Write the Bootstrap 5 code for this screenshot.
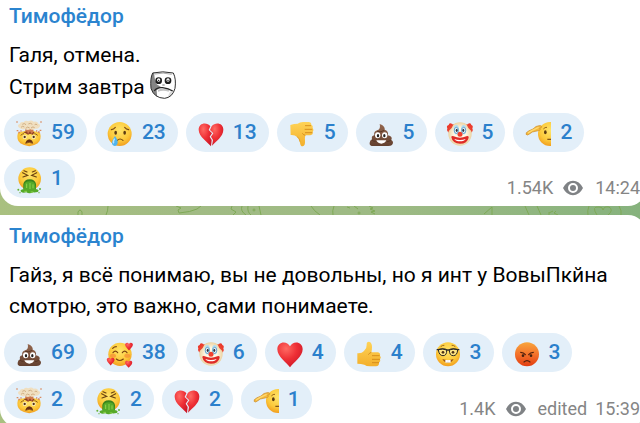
<!DOCTYPE html>
<html lang="ru">
<head>
<meta charset="utf-8">
<meta name="viewport" content="width=device-width, initial-scale=1">
<title>Тимофёдор</title>
<link href="https://cdn.jsdelivr.net/npm/bootstrap@5.3.0/dist/css/bootstrap.min.css" rel="stylesheet">
<style>
html, body { height: 100%; overflow: hidden; }
body { font-family: Roboto, "Noto Sans", sans-serif; font-size: 21px; line-height: 31px; color: #000;
  background: linear-gradient(90deg, #a9c080 0%, #a1bb84 30%, #9dba84 62%, #86b27d 100%); }
.message { margin-right: -6px; padding: 5px 6px 8px 4px; background: #fff; border-radius: 0 18px 18px 18px; }
.message-first { border-top-right-radius: 0; padding-top: 0; }
.author { font-weight: 500; color: #2b84cf; padding: 1px 0 8px 5px; }
.message-text { padding: 0 5px; margin-bottom: 11px; }
.message-first .message-text { margin-bottom: 10px; }
.sticker { width: 26px; height: 28px; vertical-align: -5px; }
.reactions { column-gap: 8px; row-gap: 8px; }
.message-first .reactions { row-gap: 7px; }
.reaction { height: 39px; padding: 0 12px; gap: 9px; border: 0; border-radius: 20px; background: #e3eff9; color: #2b80cc; font-weight: 500; }
.emoji { width: 26px; height: 26px; overflow: visible; }
.emoji-label { line-height: 33px; }
.meta { font-size: 18px; line-height: 20px; color: #858585; }
.eye { width: 20px; height: 16px; margin: 0 12px 0 10px; }
.wallpaper { height: 9px; display: block; width: 100%; }
</style>
<script src="https://cdn.jsdelivr.net/npm/bootstrap@5.3.0/dist/js/bootstrap.bundle.min.js"></script>
</head>
<body>
<svg width="0" height="0" class="position-absolute" aria-hidden="true">
  <defs>
    <radialGradient id="gFace" cx=".5" cy=".35" r=".7"><stop offset="0" stop-color="#ffe46a"/><stop offset=".6" stop-color="#fcc93a"/><stop offset="1" stop-color="#ef9419"/></radialGradient>
    <linearGradient id="gHot" x2="0" y2="1"><stop offset="0" stop-color="#f8a53c"/><stop offset=".5" stop-color="#f4722b"/><stop offset="1" stop-color="#e23c10"/></linearGradient>
    <radialGradient id="gHeart" cx=".35" cy=".25" r=".85"><stop offset="0" stop-color="#ff6a63"/><stop offset=".5" stop-color="#ee2f35"/><stop offset="1" stop-color="#c91526"/></radialGradient>
    <linearGradient id="gHand" x2="0" y2="1"><stop offset="0" stop-color="#ffd357"/><stop offset="1" stop-color="#f3af2b"/></linearGradient>
    <linearGradient id="gPoop" x2="0" y2="1"><stop offset="0" stop-color="#94674f"/><stop offset="1" stop-color="#63402f"/></linearGradient>
    <radialGradient id="gClown"><stop offset=".5" stop-color="#fff8e4"/><stop offset="1" stop-color="#ecd3a3"/></radialGradient>
    <clipPath id="cSalute"><path d="M0 0H78V84H0Z"/></clipPath>
    <clipPath id="cStone"><path d="M8 6Q38-3 70 6Q80 24 76 52Q68 80 44 83Q12 82 3 52Q-1 22 8 6Z"/></clipPath>

    <symbol id="explode" viewBox="0 0 78 78" overflow="visible">
      <path d="M6 38Q39 26 72 38Q78 58 65 70Q40 87 13 70Q0 58 6 38Z" fill="url(#gFace)"/>
      <path d="M22 37Q39 27 56 37L50 44L42 41L36 44L29 40Z" fill="#8f3e24"/>
      <path d="M27 34L30 22H50L53 34L47 42L42 34L36 42L33 34Z" fill="#cf7b4f"/>
      <path d="M8 22Q3 15 11 12Q14 4 23 7Q28 0 37 4Q46-1 53 5Q64 2 67 11Q76 14 70 22Q65 28 57 26Q51 32 43 28Q34 33 28 27Q17 31 8 22Z" fill="#f0dfc0"/>
      <path d="M15 22q5-6 10-1M29 25q6-7 12-1M45 24q6-6 11-1M19 13q6-5 11 1M37 12q6-5 12 1M56 14q4-4 8 1" fill="none" stroke="#d1ae82" stroke-width="3"/>
      <path d="M1 4h4v4H1zM2 30h5v4H2zM7 35h5v5H7zM73 4h4v4h-4zM71 29h5v4h-5zM66 34h5v5h-5zM13 31h4v4h-4zM60 31h4v4h-4z" fill="#d98b5f"/>
      <circle cx="26" cy="51" r="6" fill="#fff4cf"/><circle cx="53" cy="51" r="6" fill="#fff4cf"/>
      <circle cx="26" cy="51" r="3.500" fill="#54320f"/><circle cx="53" cy="51" r="3.500" fill="#54320f"/>
      <path d="M14 46q6-5 10-5M65 46q-6-5-10-5" stroke="#8d5a18" stroke-width="3" fill="none"/>
      <path d="M29 70Q31 59 40 59T50 70Q40 64 29 70Z" fill="#6a3212" stroke="#6a3212" stroke-width="2"/>
    </symbol>
    <symbol id="cry" viewBox="0 0 78 78" overflow="visible">
      <circle cx="38" cy="42" r="36" fill="url(#gFace)"/>
      <ellipse cx="26" cy="38" rx="4" ry="6" fill="#5b3b12"/><ellipse cx="53" cy="38" rx="4" ry="6" fill="#5b3b12"/>
      <path d="M13 29q7-1 12-7M65 29q-7-1-12-7M31 61q8-8 17 0" fill="none" stroke="#7a4b13" stroke-width="3.500" stroke-linecap="round"/>
      <path d="M24 48Q33 61 32 68Q31 77 23 78Q14 76 15 67Q16 59 24 48Z" fill="#4fb3ee"/><path d="M23 56q-6 9-3 14" fill="none" stroke="#b9e6ff" stroke-width="4"/>
    </symbol>
    <symbol id="vomit" viewBox="0 0 78 78" overflow="visible">
      <circle cx="41" cy="38" r="34" fill="url(#gFace)"/>
      <path d="M20 20L35 28L21 33M62 20L47 28L61 33M24 14l9 4M58 14l-9 4" fill="none" stroke="#6b4312" stroke-width="3.500" stroke-linecap="round"/>
      <path d="M22 54Q25 40 41 40T60 54V70H22Z" fill="#39831c"/>
      <path d="M25 55Q26 47 41 46Q57 47 57 56L59 69Q73 72 65 78Q57 80 52 79Q40 85 31 79Q20 82 15 77Q10 71 24 69Z" fill="#55a928"/>
      <path d="M32 53v13M42 51v18M51 55v12M25 76h8M44 78h8" stroke="#90d34d" stroke-width="3"/>
      <circle cx="7" cy="71" r="3" fill="#65b434"/><circle cx="72" cy="69" r="3" fill="#65b434"/><circle cx="12" cy="80" r="2" fill="#65b434"/><circle cx="69" cy="80" r="2" fill="#65b434"/>
    </symbol>
    <symbol id="heart" viewBox="0 0 78 78" overflow="visible">
      <path d="M39 82C29 68 1 50 1 28C1 4 30 1 39 19C48 1 77 4 77 28C77 50 49 68 39 82Z" fill="url(#gHeart)"/>
    </symbol>
    <symbol id="broken" viewBox="0 0 78 78" overflow="visible">
      <path d="M39 79C29 66 2 50 2 29C2 8 27 5 37 19L32 30L42 40L35 50L41 60Z" fill="url(#gHeart)"/>
      <path d="M42 77C52 65 76 50 76 29C76 9 52 5 41 19L36 30L46 40L39 50L45 60Z" fill="url(#gHeart)"/>
    </symbol>
    <symbol id="down" viewBox="0 0 78 78" overflow="visible">
      <path d="M4 15Q15 11 26 11Q32 6 42 6H59Q67 6 67 14Q73 17 71 24Q76 30 71 36Q73 44 64 46H49Q47 53 48 63Q49 77 41 79Q34 79 33 68Q32 57 24 51Q18 44 5 45Z" fill="url(#gHand)"/>
      <path d="M48 17h18M47 28h23M48 38h22M49 46q-6-1-9-6" fill="none" stroke="#cf8617" stroke-width="2.500"/><path d="M33 65q-1-11-9-15" fill="none" stroke="#dc971f" stroke-width="2"/>
    </symbol>
    <symbol id="up" viewBox="0 0 78 78" overflow="visible">
      <path d="M4 40Q18 41 24 33Q33 24 32 15Q31 5 39 5Q48 7 48 21Q48 30 46 37H66Q74 39 72 47Q77 52 72 58Q75 64 69 68Q70 78 60 79H42Q31 79 25 74Q15 71 4 71Z" fill="url(#gHand)"/>
      <path d="M48 47h23M48 58h24M48 68h21M46 37q-6 2-9 7" fill="none" stroke="#cf8617" stroke-width="2.500"/>
    </symbol>
    <symbol id="poop" viewBox="0 0 78 78" overflow="visible">
      <path d="M35 12Q52 18 50 29Q62 32 60 46Q75 49 70 60Q79 66 72 75Q67 79 57 78H19Q3 79 5 68Q6 60 12 58Q9 48 19 46Q16 34 28 31Q39 27 35 12Z" fill="url(#gPoop)"/>
      <path d="M27 34q12 4 22-3M19 48q3 3 7 3M12 60q5 5 11 4M69 60q-6 5-12 5" fill="none" stroke="#513122" stroke-width="2.500"/>
      <ellipse cx="29" cy="46" rx="8" ry="9" fill="#fff"/><ellipse cx="50" cy="46" rx="8" ry="9" fill="#fff"/>
      <ellipse cx="30" cy="47" rx="3.500" ry="5" fill="#222"/><ellipse cx="49" cy="47" rx="3.500" ry="5" fill="#222"/>
      <path d="M25 61H55Q50 71 40 71T25 61Z" fill="#fff"/>
    </symbol>
    <symbol id="clown" viewBox="0 0 78 78" overflow="visible">
      <path d="M16 12Q6 7 5 15Q-3 18 1 25Q-2 34 6 38L18 30ZM62 12Q72 7 73 15Q80 18 76 25Q80 34 72 38L60 30Z" fill="#ec3a2c"/>
      <circle cx="39" cy="42" r="35" fill="url(#gClown)"/>
      <path d="M5 33Q5 15 20 12L14 24ZM73 33Q73 15 58 12L64 24Z" fill="#e94632"/>
      <ellipse cx="28" cy="29" rx="8" ry="14" fill="#b2dcf1"/><ellipse cx="50" cy="29" rx="8" ry="14" fill="#b2dcf1"/>
      <ellipse cx="28" cy="31" rx="6" ry="9" fill="#fff" stroke="#297baf" stroke-width="2"/><ellipse cx="50" cy="31" rx="6" ry="9" fill="#fff" stroke="#297baf" stroke-width="2"/>
      <ellipse cx="29" cy="31" rx="3" ry="5" fill="#243342"/><ellipse cx="49" cy="31" rx="3" ry="5" fill="#243342"/>
      <path d="M13 52Q13 46 20 49Q39 57 58 49Q66 46 65 53Q61 71 39 71T13 52Z" fill="#df2b26"/>
      <path d="M22 57Q39 63 56 57Q52 64 39 64T22 57Z" fill="#fff"/><circle cx="39" cy="43" r="7.500" fill="#f0412e"/>
    </symbol>
    <symbol id="salute" viewBox="0 0 78 78" overflow="visible">
      <g clip-path="url(#cSalute)"><circle cx="75" cy="42" r="36" fill="url(#gFace)"/>
      <ellipse cx="61" cy="37" rx="4" ry="6" fill="#5b3b12"/><path d="M67 58h12" stroke="#7a4b13" stroke-width="3.500"/><path d="M55 27q5-6 11-5" fill="none" stroke="#9a661a" stroke-width="3"/></g>
      <path d="M4 38Q10 32 24 27Q33 17 42 17Q49 16 50 20Q50 24 44 25Q48 27 44 31Q32 34 22 36Q14 42 8 45Q1 45 4 38Z" fill="#f5b93b" stroke="#c98a28" stroke-width="2"/>
      <path d="M9 39Q22 30 41 22" stroke="#ffd970" stroke-width="4" fill="none"/>
    </symbol>
    <symbol id="love" viewBox="0 0 78 78" overflow="visible">
      <circle cx="39" cy="43" r="35" fill="url(#gFace)"/><ellipse cx="18" cy="47" rx="9" ry="6" fill="#f58b36" opacity=".7"/><ellipse cx="61" cy="47" rx="9" ry="6" fill="#f58b36" opacity=".7"/>
      <path d="M18 38q7-9 14 0M46 38q7-9 14 0M28 57q10 9 21 0M17 25q5-5 11-5" fill="none" stroke="#7a4310" stroke-width="3.500" stroke-linecap="round"/>
      <use href="#heart" x="53" y="6" width="26" height="24"/><use href="#heart" x="-1" y="51" width="24" height="24"/><use href="#heart" x="53" y="60" width="24" height="22"/>
    </symbol>
    <symbol id="nerd" viewBox="0 0 78 78" overflow="visible">
      <circle cx="39" cy="43" r="36" fill="url(#gFace)"/>
      <path d="M5 29H10Q24 24 37 30H41Q54 24 68 29H73" fill="none" stroke="#292725" stroke-width="4"/>
      <path d="M10 29Q24 25 35 30Q36 47 24 47T10 29ZM43 30Q54 25 68 29Q67 47 55 47T43 30Z" fill="#fff0a8" fill-opacity=".6" stroke="#292725" stroke-width="3"/>
      <circle cx="24" cy="37" r="4" fill="#4b3016"/><circle cx="54" cy="37" r="4" fill="#4b3016"/>
      <path d="M22 57Q39 64 56 57Q51 68 39 68T22 57Z" fill="#9a5418"/><path d="M31 60h16v8H31z" fill="#fff"/><path d="M39 60v8" stroke="#ccc"/>
      <path d="M17 20q6-5 11-4M61 20q-6-5-11-4" fill="none" stroke="#a26a16" stroke-width="3"/>
    </symbol>
    <symbol id="angry" viewBox="0 0 78 78" overflow="visible">
      <circle cx="39" cy="43" r="36" fill="url(#gHot)"/>
      <path d="M20 37Q29 37 34 44M58 37Q49 37 44 44M30 66q9-8 18 0" fill="none" stroke="#54200c" stroke-width="3.500" stroke-linecap="round"/>
      <circle cx="27" cy="47" r="4" fill="#46200f"/><circle cx="51" cy="47" r="4" fill="#46200f"/>
    </symbol>
    <symbol id="eye" viewBox="0 0 60 46">
      <path fill-rule="evenodd" d="M0 23Q11 1 30 1T60 23Q49 45 30 45T0 23ZM30 8a15 15 0 1 0 0 30a15 15 0 1 0 0-30ZM30 14a9 9 0 1 1 0 18a9 9 0 1 1 0-18Z" fill="#7f8285"/>
    </symbol>
  </defs>
</svg>

<main>
  <article class="message message-first">
    <div class="author"><a href="#" class="text-reset text-decoration-none">Тимофёдор</a></div>
    <p class="message-text">Галя, отмена.<br>Стрим завтра
      <svg class="sticker" viewBox="0 0 78 84" role="img" aria-label="каменное лицо">
        <g clip-path="url(#cStone)"><path d="M0 0H78V84H0Z" fill="#fff"/><path d="M0 0H14Q10 16 20 40L33 48L20 58L22 84H0Z" fill="#858585"/><path d="M24 56Q38 50 58 56L56 62Q40 56 24 62Z" fill="#c4c4c4"/><path d="M60 62L50 84H78V58Z" fill="#ddd"/><path d="M15 9q24-6 50 1" fill="none" stroke="#aaa" stroke-width="3"/></g>
        <path d="M8 6Q38-1 70 6Q79 24 75 52Q68 79 44 82Q12 81 3 52Q0 22 8 6Z" fill="none" stroke="#303030" stroke-width="3"/>
        <circle cx="26" cy="29" r="10" fill="#1c1c1c"/><circle cx="54" cy="29" r="10" fill="#1c1c1c"/><circle cx="26" cy="27" r="5" fill="#fff"/><circle cx="54" cy="27" r="5" fill="#fff"/><circle cx="26" cy="28" r="2"/><circle cx="54" cy="28" r="2"/>
        <path d="M13 60Q20 48 38 50T68 60" fill="none" stroke="#252525" stroke-width="4"/>
        <path d="M37 42h7" fill="none" stroke="#777" stroke-width="3"/>
      </svg></p>
    <div class="reactions d-flex flex-wrap">
      <button type="button" class="reaction d-flex align-items-center"><svg class="emoji" aria-hidden="true"><use href="#explode"/></svg><span class="emoji-label">59</span></button>
      <button type="button" class="reaction d-flex align-items-center"><svg class="emoji" aria-hidden="true"><use href="#cry"/></svg><span class="emoji-label">23</span></button>
      <button type="button" class="reaction d-flex align-items-center"><svg class="emoji" aria-hidden="true"><use href="#broken"/></svg><span class="emoji-label">13</span></button>
      <button type="button" class="reaction d-flex align-items-center"><svg class="emoji" aria-hidden="true"><use href="#down"/></svg><span class="emoji-label">5</span></button>
      <button type="button" class="reaction d-flex align-items-center"><svg class="emoji" aria-hidden="true"><use href="#poop"/></svg><span class="emoji-label">5</span></button>
      <button type="button" class="reaction d-flex align-items-center"><svg class="emoji" aria-hidden="true"><use href="#clown"/></svg><span class="emoji-label">5</span></button>
      <button type="button" class="reaction d-flex align-items-center"><svg class="emoji" aria-hidden="true"><use href="#salute"/></svg><span class="emoji-label">2</span></button>
      <button type="button" class="reaction d-flex align-items-center"><svg class="emoji" aria-hidden="true"><use href="#vomit"/></svg><span class="emoji-label">1</span></button>
      <div class="meta d-flex align-items-center ms-auto align-self-end"><span>1.54K</span><svg class="eye" role="img" aria-label="views"><use href="#eye"/></svg><time>14:24</time></div>
    </div>
  </article>

  <svg class="wallpaper" viewBox="0 0 640 9" preserveAspectRatio="none" aria-hidden="true">
    <g fill="none" stroke="#7fa956" stroke-width="1">
      <path d="M78 9V6q2-4 4 0v3M108 0q0 5-2 9M176 0l5 2-3 2 1 3q12-1 18-4l4-3M232 0l-1 3 5 3-3 3M242 0q-2 5 4 9M248 0q-1 6 3 9M259 0l2 9M311 0q3 5 9 9"/>
      <path d="M334 0q-2 5-1 9M347 1l3 1m4-2 4 3M369 0l4 2-3 1 5 2-4 1 4 2M484 8l8-7v8M525 0l4 9M537 0l4 9M549 6v3m0-2 4-2m3 0-2 2 4 2M589 0q-2 5-1 9M619 0q3 5 2 9M597 9q-6-9 2-8 4 0 4 3 1-4 6-3 5 3-1 8"/>
      <circle cx="254" cy="4" r="1"/><circle cx="359" cy="7" r="1"/>
    </g>
  </svg>

  <article class="message">
    <div class="author"><a href="#" class="text-reset text-decoration-none">Тимофёдор</a></div>
    <p class="message-text">Гайз, я всё понимаю, вы не довольны, но я инт у ВовыПкйна<br>смотрю, это важно, сами понимаете.</p>
    <div class="reactions d-flex flex-wrap">
      <button type="button" class="reaction d-flex align-items-center"><svg class="emoji" aria-hidden="true"><use href="#poop"/></svg><span class="emoji-label">69</span></button>
      <button type="button" class="reaction d-flex align-items-center"><svg class="emoji" aria-hidden="true"><use href="#love"/></svg><span class="emoji-label">38</span></button>
      <button type="button" class="reaction d-flex align-items-center"><svg class="emoji" aria-hidden="true"><use href="#clown"/></svg><span class="emoji-label">6</span></button>
      <button type="button" class="reaction d-flex align-items-center"><svg class="emoji" aria-hidden="true"><use href="#heart"/></svg><span class="emoji-label">4</span></button>
      <button type="button" class="reaction d-flex align-items-center"><svg class="emoji" aria-hidden="true"><use href="#up"/></svg><span class="emoji-label">4</span></button>
      <button type="button" class="reaction d-flex align-items-center"><svg class="emoji" aria-hidden="true"><use href="#nerd"/></svg><span class="emoji-label">3</span></button>
      <button type="button" class="reaction d-flex align-items-center"><svg class="emoji" aria-hidden="true"><use href="#angry"/></svg><span class="emoji-label">3</span></button>
      <button type="button" class="reaction d-flex align-items-center"><svg class="emoji" aria-hidden="true"><use href="#explode"/></svg><span class="emoji-label">2</span></button>
      <button type="button" class="reaction d-flex align-items-center"><svg class="emoji" aria-hidden="true"><use href="#vomit"/></svg><span class="emoji-label">2</span></button>
      <button type="button" class="reaction d-flex align-items-center"><svg class="emoji" aria-hidden="true"><use href="#broken"/></svg><span class="emoji-label">2</span></button>
      <button type="button" class="reaction d-flex align-items-center"><svg class="emoji" aria-hidden="true"><use href="#salute"/></svg><span class="emoji-label">1</span></button>
      <div class="meta d-flex align-items-center ms-auto align-self-end"><span>1.4K</span><svg class="eye" role="img" aria-label="views"><use href="#eye"/></svg><span class="me-2">edited</span><time>15:39</time></div>
    </div>
  </article>
</main>
</body>
</html>
